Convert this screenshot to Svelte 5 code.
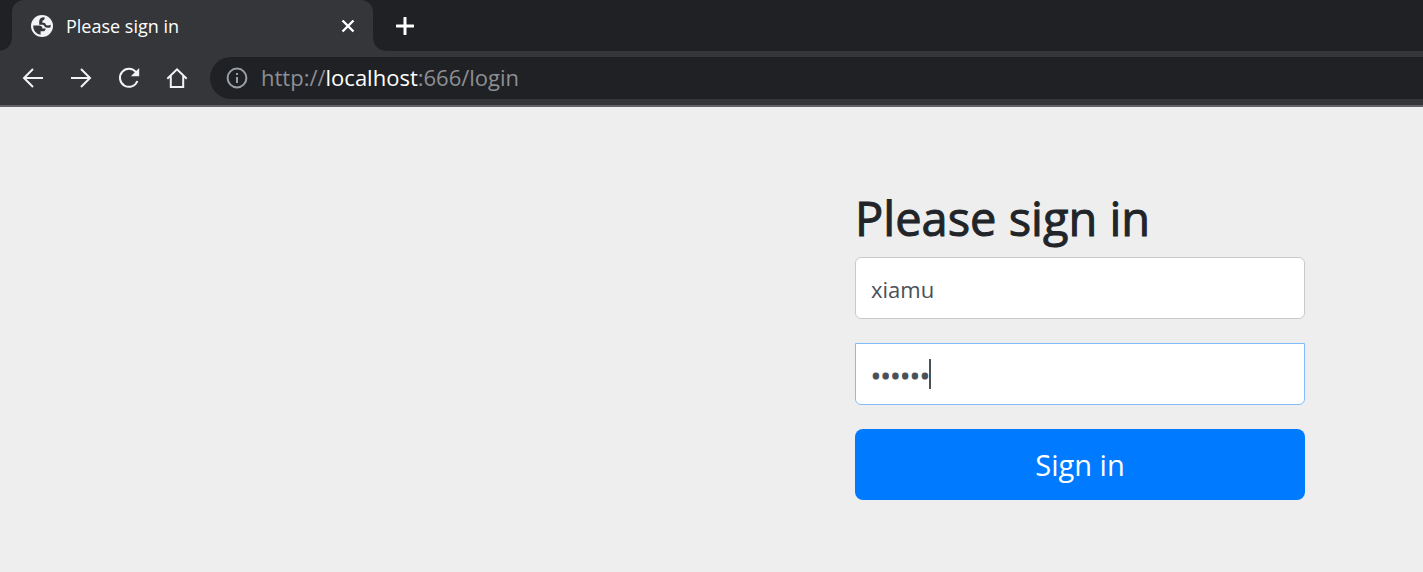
<script lang="ts">
  let username = $state('xiamu');
  let password = $state('secret');
</script>

<div class="window">
  <header class="browser">
    <div class="tabs">
      <div class="tab">
        <svg class="globe" viewBox="0 0 22 22" aria-hidden="true">
          <circle cx="11" cy="11" r="11" fill="#f1f3f4" />
          <path d="M2.2 10.5 H7.8 C10.2 10.5 11.4 11.6 11.4 13.4 H14.6 C14.6 15.4 13.4 16.2 11.6 16.2 H9.6 V19.7 C5.2 19 2.1 15.4 2.2 10.5Z" fill="#35363a" />
          <path d="M13.8 2.4 C13.6 4.2 13 5.2 11.6 5.6 C11.2 6.6 11.2 7.6 11.8 7.8 C13.8 7.8 14.6 8.4 14.8 9.6 C15 10.8 18.2 10.6 19.8 9.8 L19.6 12.2 C17.6 13 15.2 13 14 12 C13 11.2 13.4 10.2 12 9.8 H8.2 V6.6 C8.2 4.2 9.8 2.4 12 2.2Z" fill="#35363a" />
        </svg>
        <span class="title">Please sign in</span>
        <button class="close" type="button" aria-label="Close tab">
          <svg viewBox="0 0 14 14"><path d="M1.5 1.5 L12.5 12.5 M12.5 1.5 L1.5 12.5" /></svg>
        </button>
      </div>
      <button class="new" type="button" aria-label="New tab">
        <svg viewBox="0 0 18 18"><path d="M9 1 V17 M1 9 H17" /></svg>
      </button>
    </div>
    <div class="toolbar">
      <nav class="actions" aria-label="Browser navigation">
        <button type="button" aria-label="Back">
          <svg viewBox="0 0 22 22"><path d="M21 11 H2 M11 2 L2 11 L11 20" /></svg>
        </button>
        <button type="button" aria-label="Forward">
          <svg viewBox="0 0 22 22"><path d="M1 11 H20 M11 2 L20 11 L11 20" /></svg>
        </button>
        <button type="button" aria-label="Reload">
          <svg viewBox="0 0 22 22"><path d="M18 5.2 A9 9 0 1 0 19.4 14" /><path class="solid" d="M21.2 1 V9.3 H12.8Z" /></svg>
        </button>
        <button type="button" aria-label="Home">
          <svg viewBox="0 0 22 22"><path d="M1.3 11.7 L11 2.4 L20.7 11.7 M4.8 9 V20 H17.2 V9" /></svg>
        </button>
      </nav>
      <div class="omnibox">
        <svg viewBox="0 0 22 22" aria-hidden="true"><circle cx="11" cy="11" r="9.4" /><path d="M11 10 V16 M11 6 V8" /></svg>
        <div class="url" role="textbox" tabindex="0" aria-label="Address" contenteditable="true">http://<span>localhost</span>:666/login</div>
      </div>
    </div>
  </header>

  <main>
    <form onsubmit={(event) => event.preventDefault()}>
      <h1>Please sign in</h1>
      <input type="text" aria-label="Username" autocomplete="off" bind:value={username} />
      <div class="field">
        <input class="active" type="password" aria-label="Password" autocomplete="off" bind:value={password} />
        <i class="caret"></i>
      </div>
      <button class="submit" type="submit">Sign in</button>
    </form>
  </main>
</div>

<style>
  :global(body) {
    margin: 0;
    background: #eee;
  }

  .window,
  .window * {
    box-sizing: border-box;
  }

  .window {
    font-family: 'Open Sans', 'Noto Sans', sans-serif;
    overflow: hidden;
  }

  button {
    font-family: inherit;
    border: 0;
    padding: 0;
    background: none;
    cursor: pointer;
  }

  svg {
    display: block;
    flex: none;
  }

  .browser {
    background: #35363a;
    border-bottom: 2px solid #626367;
  }

  .browser button {
    display: grid;
    place-items: center;
  }

  .browser button svg {
    fill: none;
    stroke: #f1f3f4;
    stroke-width: 2;
  }

  .tabs {
    display: flex;
    height: 51px;
    padding-left: 12px;
    background: #202124;
  }

  .tab {
    position: relative;
    display: flex;
    align-items: center;
    width: 361px;
    padding: 0 16px 0 19px;
    border-radius: 12px 12px 0 0;
    background: #35363a;
  }

  .tab::before,
  .tab::after {
    content: '';
    position: absolute;
    bottom: 0;
    width: 12px;
    height: 12px;
  }

  .tab::before {
    right: 100%;
    background: radial-gradient(circle at 0 0, #202124 11px, #35363a 12px);
  }

  .tab::after {
    left: 100%;
    background: radial-gradient(circle at 100% 0, #202124 11px, #35363a 12px);
  }

  .globe {
    width: 22px;
    height: 22px;
  }

  .title {
    flex: 1;
    margin-left: 13px;
    color: #fff;
    font-size: 18px;
    line-height: 24px;
  }

  .close svg {
    width: 14px;
    height: 14px;
  }

  .browser .close svg {
    stroke: #fff;
    stroke-width: 2.4;
  }

  .browser .new svg {
    stroke: #fff;
    stroke-width: 3;
    stroke-linecap: round;
  }

  .close {
    width: 18px;
    height: 24px;
  }

  .new {
    width: 40px;
    margin-left: 12px;
  }

  .new svg {
    width: 18px;
    height: 18px;
  }

  .toolbar {
    display: flex;
    align-items: center;
    padding: 6px 0 6px 22px;
  }

  .actions {
    display: flex;
    gap: 26px;
  }

  .actions svg {
    width: 22px;
    height: 22px;
  }

  .actions .solid {
    fill: #f1f3f4;
    stroke: none;
  }

  .omnibox {
    display: flex;
    flex: 1;
    align-items: center;
    height: 42px;
    margin-left: 22px;
    padding-left: 16px;
    border-radius: 21px 0 0 21px;
    background: #202124;
  }

  .omnibox svg {
    width: 22px;
    height: 22px;
    fill: none;
    stroke: #9aa0a6;
    stroke-width: 2;
  }

  .url {
    flex: 1;
    margin-left: 13px;
    padding-bottom: 2px;
    color: #8c8f94;
    font-size: 22px;
    line-height: 30px;
    white-space: nowrap;
    outline: none;
  }

  .url span {
    color: #fff;
  }

  main {
    display: flex;
    justify-content: flex-end;
    padding: 82px 118px 72px 24px;
  }

  form {
    display: flex;
    flex-direction: column;
    width: 100%;
    max-width: 450px;
  }

  h1 {
    margin: 0 0 10px;
    color: #212529;
    font-size: 47px;
    font-weight: 500;
    line-height: 58px;
    white-space: nowrap;
    -webkit-text-stroke: 1px #212529;
  }

  input {
    display: block;
    width: 100%;
    height: 62px;
    padding: 2px 15px 0;
    border: 1px solid #c6cacd;
    border-radius: 6px;
    background: #fff;
    color: #495057;
    font-family: inherit;
    font-size: 22px;
    line-height: 32px;
    outline: none;
  }

  .field {
    position: relative;
    margin: 24px 0;
  }

  input.active {
    padding-top: 2px;
    border-color: #80bdff;
    border-radius: 0 0 6px 6px;
    font-size: 26px;
    -webkit-text-stroke: 1px #495057;
  }

  .caret {
    position: absolute;
    top: 16px;
    left: 74px;
    width: 2px;
    height: 30px;
    background: #495057;
  }

  .submit {
    height: 71px;
    border-radius: 8px;
    background: #007bff;
    color: #fff;
    font-size: 29px;
    line-height: 42px;
  }
</style>
